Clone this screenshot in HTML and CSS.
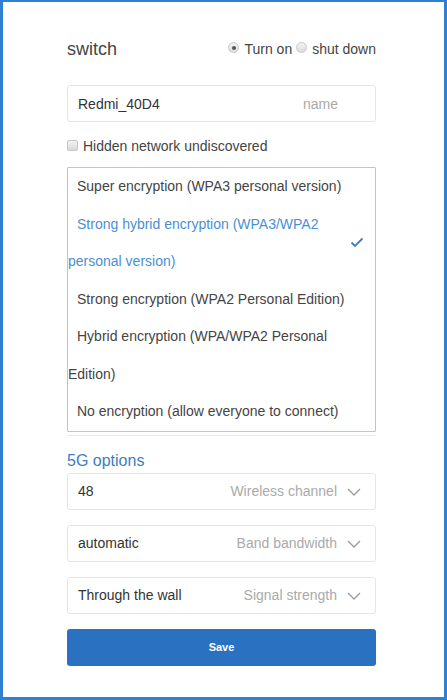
FILE: index.html
```html
<!DOCTYPE html>
<html lang="en">
<head>
<meta charset="utf-8">
<title>WiFi settings</title>
<link rel="stylesheet" href="styles.css">
</head>
<body>
<div class="frame">
  <div class="form">
    <div class="head-row">
      <span class="title">switch</span>
      <div class="radios">
        <span class="radio checked"></span><span class="radio-label">Turn on</span>
        <span class="radio"></span><span class="radio-label">shut down</span>
      </div>
    </div>

    <div class="field name-field">
      <span class="value">Redmi_40D4</span>
      <span class="hint">name</span>
    </div>

    <div class="check-row">
      <span class="checkbox"></span>
      <span class="check-label">Hidden network undiscovered</span>
    </div>

    <div class="menu">
      <div class="opt">Super encryption (WPA3 personal version)</div>
      <div class="opt selected">Strong hybrid encryption (WPA3/WPA2 personal version)
        <svg class="tick" width="14" height="11" viewBox="0 0 14 11"><path d="M1.5 5.5 L5 9 L12.5 1.5" fill="none" stroke="#3b7fc4" stroke-width="1.8"/></svg>
      </div>
      <div class="opt">Strong encryption (WPA2 Personal Edition)</div>
      <div class="opt">Hybrid encryption (WPA/WPA2 Personal Edition)</div>
      <div class="opt">No encryption (allow everyone to connect)</div>
    </div>
    <div class="under-line"></div>

    <div class="section">5G options</div>

    <div class="field select first">
      <span class="value">48</span>
      <span class="hint">Wireless channel</span>
      <svg class="chev" width="14" height="8" viewBox="0 0 14 8"><path d="M1 1 L7 7 L13 1" fill="none" stroke="#999" stroke-width="1.3"/></svg>
    </div>
    <div class="field select">
      <span class="value">automatic</span>
      <span class="hint">Band bandwidth</span>
      <svg class="chev" width="14" height="8" viewBox="0 0 14 8"><path d="M1 1 L7 7 L13 1" fill="none" stroke="#999" stroke-width="1.3"/></svg>
    </div>
    <div class="field select">
      <span class="value">Through the wall</span>
      <span class="hint">Signal strength</span>
      <svg class="chev" width="14" height="8" viewBox="0 0 14 8"><path d="M1 1 L7 7 L13 1" fill="none" stroke="#999" stroke-width="1.3"/></svg>
    </div>

    <button class="save">Save</button>
  </div>
</div>
</body>
</html>
```
FILE: styles.css
```css
* { box-sizing: border-box; }
html, body { margin: 0; padding: 0; background: #fff; }
body {
  font-family: "Liberation Sans", Arial, sans-serif;
  color: #333;
}
.frame {
  width: 447px;
  height: 700px;
  border: 3px solid #2f80d1;
  border-top-width: 2px;
  background: #fff;
}
.form {
  width: 309px;
  margin-left: 64px;
  padding-top: 35px;
  display: flex;
  flex-direction: column;
}
.head-row {
  display: flex;
  align-items: center;
  justify-content: space-between;
  height: 24px;
}
.title {
  font-size: 18px;
  color: #444;
}
.radios {
  display: flex;
  align-items: center;
  font-size: 14px;
  color: #444;
}
.radio {
  width: 11px;
  height: 11px;
  border-radius: 50%;
  border: 1px solid #c9c9c9;
  background: linear-gradient(#f4f4f4, #dcdcdc);
  margin-right: 5px;
  margin-top: -3px;
  position: relative;
}
.radio.checked::after {
  content: "";
  position: absolute;
  left: 2.5px;
  top: 2.5px;
  width: 4px;
  height: 4px;
  border-radius: 50%;
  background: #555;
}
.radio-label { margin-right: 4px; }
.radio-label:last-child { margin-right: 0; }

.field {
  height: 37px;
  border: 1px solid #e6e6e6;
  border-radius: 3px;
  display: flex;
  align-items: center;
  padding: 0 14px 0 10px;
  font-size: 14px;
}
.field .value { color: #333; flex: 1; }
.field .hint { color: #aaa; }
.name-field {
  margin-top: 24px;
  padding-right: 37px;
}
.check-row {
  margin-top: 14px;
  height: 20px;
  display: flex;
  align-items: center;
  font-size: 14px;
  color: #444;
}
.checkbox {
  width: 11px;
  height: 11px;
  border: 1px solid #c6c6c6;
  border-radius: 2px;
  background: linear-gradient(#f2f2f2, #dadada);
  margin-right: 5px;
  margin-top: -2px;
}
.menu {
  margin-top: 11px;
  border: 1px solid #b3c8dc;
  border-radius: 1px;
  font-size: 14px;
  line-height: 37.5px;
  color: #444;
}
.opt {
  text-indent: 9px;
  position: relative;
  padding-right: 18px;
}
.opt.selected { color: #4a8fd4; padding-right: 30px; }
.tick {
  position: absolute;
  right: 11px;
  top: 50%;
  margin-top: -6px;
}
.under-line {
  margin: 3px 1px 0;
  height: 1px;
  background: #e4e8ec;
}
.section {
  margin-top: 15px;
  height: 20px;
  line-height: 20px;
  font-size: 16px;
  color: #3d7dc0;
}
.select { margin-top: 15px; }
.select.first { margin-top: 2px; }
.chev { margin-left: 10px; margin-top: 2px; }
.save {
  margin-top: 15px;
  height: 37px;
  border: none;
  border-radius: 3px;
  background: #2a72c1;
  color: #fff;
  font-family: "Liberation Sans", Arial, sans-serif;
  font-size: 11px;
  font-weight: bold;
}
```
